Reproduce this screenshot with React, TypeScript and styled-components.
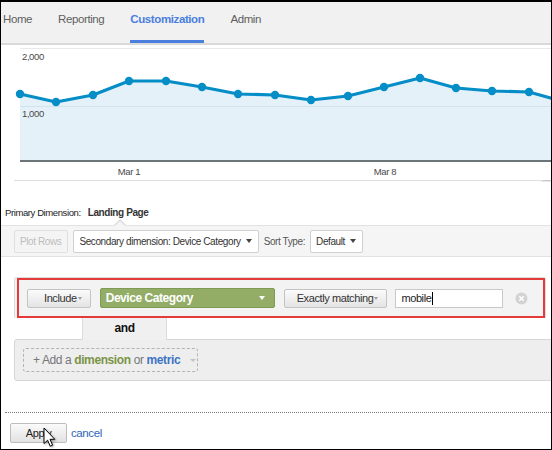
import styled, { createGlobalStyle } from "styled-components";

const FONT = `"Liberation Sans", Arial, sans-serif`;

const GlobalStyle = createGlobalStyle`
  * {
    box-sizing: border-box;
  }
  body {
    margin: 0;
    background: #fff;
    font-family: ${FONT};
    letter-spacing: -0.4px;
  }
  button {
    letter-spacing: inherit;
  }
`;

const navItems = ["Home", "Reporting", "Customization", "Admin"];

// sessions per day, already in page pixels
const points: [number, number][] = [
  [20, 94],
  [56, 102],
  [93, 95],
  [129, 81],
  [166, 81],
  [202, 87],
  [238, 94],
  [275, 95],
  [311, 100],
  [348, 96],
  [384, 87],
  [420, 78],
  [456, 88],
  [492, 91],
  [529, 92],
  [565, 102]
];

const Chart = () => {
  const line = points.map(([x, y]) => `${x},${y}`).join(" ");
  const area = `${line} 565,161 20,161`;
  return (
    <ChartSvg viewBox="1 45 550 137" width={550} height={137}>
      <line x1={20} y1={48.5} x2={560} y2={48.5} stroke="#e9e9e9" />
      <polygon points={area} fill="#e5f1f8" />
      <line x1={20} y1={106.5} x2={560} y2={106.5} stroke="#d2e3ec" />
      <line x1={20} y1={161} x2={560} y2={161} stroke="#6b7478" strokeWidth={2} />
      <polyline
        points={line}
        fill="none"
        stroke="#058dc7"
        strokeWidth={3.2}
        strokeLinejoin="round"
      />
      {points.slice(0, 15).map(([x, y], i) => (
        <circle key={`pt-${i}`} cx={x} cy={y} r={4.2} fill="#058dc7" />
      ))}
      <AxisText x={22} y={60}>
        2,000
      </AxisText>
      <AxisText x={22} y={117}>
        1,000
      </AxisText>
      <AxisText x={129} y={175} textAnchor="middle">
        Mar 1
      </AxisText>
      <AxisText x={385} y={175} textAnchor="middle">
        Mar 8
      </AxisText>
      <line x1={14} y1={180.5} x2={560} y2={180.5} stroke="#dedede" />
      <rect x={542.5} y={180.5} width={12} height={6} rx={1} fill="#e8e8e8" stroke="#c9c9c9" />
    </ChartSvg>
  );
};

const App = () => {
  return (
    <>
      <GlobalStyle />
      <Frame>
        <Nav>
          {navItems.map((item) => (
            <NavTab key={item} $active={item === "Customization"}>
              {item}
            </NavTab>
          ))}
        </Nav>

        <Chart />

        <PrimaryRow>
          <span>Primary Dimension:</span>
          <PrimaryValue>Landing Page</PrimaryValue>
        </PrimaryRow>

        <Toolbar>
          <ToolButton $disabled>Plot Rows</ToolButton>
          <ToolButton>
            Secondary dimension: Device Category
            <Caret $half={3.5} $color="#444" />
          </ToolButton>
          <ToolLabel>Sort Type:</ToolLabel>
          <ToolButton>
            Default
            <Caret $half={3.5} $color="#444" />
          </ToolButton>
        </Toolbar>

        <FilterCard>
          <Highlight>
            <FilterButton $padLeft={16}>
              Include
              <Caret $half={2.5} $color="#a0a0a0" />
            </FilterButton>
            <DimensionPill>
              Device Category
              <Caret $half={3.5} $color="#fff" />
            </DimensionPill>
            <FilterButton $padLeft={12}>
              Exactly matching
              <Caret $half={2.5} $color="#a0a0a0" />
            </FilterButton>
            <ValueInput>
              mobile
              <TextCursor />
            </ValueInput>
            <RemoveIcon width={13} height={13} viewBox="0 0 13 13">
              <circle cx={6.5} cy={6.5} r={6} fill="#d3d3d3" />
              <path d="M4.3 4.3 L8.7 8.7 M8.7 4.3 L4.3 8.7" stroke="#fff" strokeWidth={1.6} />
            </RemoveIcon>
          </Highlight>
        </FilterCard>

        <AndTab>and</AndTab>
        <AddPanel>
          <AddBox>
            <Muted>+ Add a</Muted>
            <Dimension>dimension</Dimension>
            <Muted>or</Muted>
            <Metric>metric</Metric>
            <Caret $half={3} $color="#c4c4c4" />
          </AddBox>
        </AddPanel>

        <Divider />

        <ApplyRow>
          <ApplyButton>Apply</ApplyButton>
          <CancelLink href="#">cancel</CancelLink>
        </ApplyRow>

        <Pointer width={14} height={21} viewBox="0 0 14 21">
          <path
            d="M1 1 L1 16.5 L4.6 13.2 L7.2 19.2 L9.6 18.2 L7 12.3 L11.8 12.3 Z"
            fill="#fff"
            stroke="#000"
            strokeWidth={1}
            strokeLinejoin="round"
          />
        </Pointer>
      </Frame>
    </>
  );
};

const Frame = styled.div`
  position: relative;
  width: 552px;
  height: 450px;
  overflow: hidden;
  background: #fff;
  border: 1px solid #000;
  border-top-width: 2px;
`;

const Nav = styled.nav`
  display: flex;
  gap: 26px;
  height: 43px;
  padding-left: 2px;
  background: #f1f1f1;
  border-bottom: 2px solid #d9d9d9;
`;

const NavTab = styled.div<{ $active?: boolean }>`
  height: 41px;
  padding-top: 10px;
  font-size: 11.5px;
  line-height: 15px;
  font-weight: ${({ $active }) => ($active ? "bold" : "normal")};
  color: ${({ $active }) => ($active ? "#4a7fe0" : "#5f5f5f")};
  border-bottom: 3px solid
    ${({ $active }) => ($active ? "#4a7fe0" : "transparent")};
`;

const ChartSvg = styled.svg`
  display: block;
`;

const AxisText = styled.text`
  font-family: ${FONT};
  font-size: 9.5px;
  letter-spacing: -0.4px;
  fill: #4a4a4a;
`;

const PrimaryRow = styled.div`
  height: 43px;
  display: flex;
  align-items: flex-end;
  gap: 7px;
  padding: 0 0 6px 4px;
  font-size: 9.5px;
  line-height: 12px;
  color: #222;
`;

const PrimaryValue = styled.span`
  font-size: 10px;
  font-weight: bold;
  color: #333;
`;

const Toolbar = styled.div`
  position: relative;
  height: 32px;
  display: flex;
  align-items: center;
  gap: 5px;
  padding-left: 13px;
  background: #f5f5f5;
  border-top: 1px solid #e2e2e2;
  border-bottom: 1px solid #e2e2e2;

  &::before,
  &::after {
    content: "";
    position: absolute;
    width: 0;
    height: 0;
    border-style: solid;
  }
  &::before {
    left: 113px;
    top: -7px;
    border-width: 0 6px 6px 6px;
    border-color: transparent transparent #dadada transparent;
  }
  &::after {
    left: 114px;
    top: -5px;
    border-width: 0 5px 5px 5px;
    border-color: transparent transparent #f5f5f5 transparent;
  }
`;

const ToolButton = styled.button<{ $disabled?: boolean }>`
  height: 23px;
  display: inline-flex;
  align-items: center;
  gap: 5px;
  padding: 0 6px 0 5px;
  border: 1px solid ${({ $disabled }) => ($disabled ? "#e0e0e0" : "#d0d0d0")};
  border-radius: 2px;
  background: ${({ $disabled }) => ($disabled ? "#f4f4f4" : "#fff")};
  color: ${({ $disabled }) => ($disabled ? "#bdbdbd" : "#333")};
  font-family: ${FONT};
  font-size: 10px;
  white-space: nowrap;
`;

const ToolLabel = styled.span`
  font-size: 10px;
  color: #555;
`;

const Caret = styled.span<{ $half: number; $color: string }>`
  display: inline-block;
  flex-shrink: 0;
  width: 0;
  height: 0;
  border-left: ${({ $half }) => $half}px solid transparent;
  border-right: ${({ $half }) => $half}px solid transparent;
  border-top: ${({ $half }) => Math.round($half * 1.15)}px solid
    ${({ $color }) => $color};
`;

const FilterCard = styled.div`
  width: 532px;
  margin: 20px 0 0 13px;
  padding-left: 2px;
  background: #f3f3f3;
  border: 1px solid #dcdcdc;
  border-bottom: none;
  border-radius: 3px 3px 0 0;
`;

const Highlight = styled.div`
  height: 40px;
  display: flex;
  align-items: center;
  gap: 9px;
  padding-left: 8px;
  border: 2px solid #e53a3a;
`;

const FilterButton = styled.button<{ $padLeft: number }>`
  height: 19px;
  display: inline-flex;
  align-items: center;
  gap: 1px;
  padding: 0 8px 0 ${({ $padLeft }) => $padLeft}px;
  border: 1px solid #c4c4c4;
  border-radius: 2px;
  background: linear-gradient(#fbfbfb, #e4e4e4);
  color: #333;
  font-family: ${FONT};
  font-size: 11px;
  white-space: nowrap;
`;

const DimensionPill = styled.div`
  width: 175px;
  height: 20px;
  display: flex;
  align-items: center;
  justify-content: space-between;
  padding: 0 9px 0 5px;
  background: #93ad67;
  border: 1px solid #7f9a52;
  border-radius: 2px;
  color: #fff;
  font-size: 12px;
  font-weight: bold;
  letter-spacing: -0.45px;
`;

const ValueInput = styled.div`
  width: 108px;
  height: 19px;
  display: flex;
  align-items: center;
  margin-left: -1px;
  padding-left: 5px;
  background: #fff;
  border: 1px solid #c8c8c8;
  color: #222;
  font-size: 11px;
`;

const TextCursor = styled.span`
  width: 1px;
  height: 13px;
  margin-left: 1px;
  background: #000;
`;

const RemoveIcon = styled.svg`
  margin-left: 3px;
`;

const AndTab = styled.div`
  position: relative;
  z-index: 1;
  width: 85px;
  height: 22px;
  margin: 0 0 -1px 81px;
  background: #f0f0f0;
  border-left: 1px solid #dcdcdc;
  border-right: 1px solid #dcdcdc;
  text-align: center;
  font-size: 12px;
  font-weight: bold;
  line-height: 20px;
  color: #111;
`;

const AddPanel = styled.div`
  width: 545px;
  height: 42px;
  margin-left: 13px;
  padding: 8px 0 0 8px;
  background: #eeeeee;
  border: 1px solid #d6d6d6;
  border-radius: 3px 0 0 3px;
`;

const AddBox = styled.div`
  width: 175px;
  height: 24px;
  display: flex;
  align-items: center;
  gap: 3px;
  padding-left: 9px;
  border: 1px dashed #b3b3b3;
  border-radius: 3px;
  font-size: 12px;
  white-space: nowrap;

  & > span:last-child {
    margin-left: 7px;
  }
`;

const Muted = styled.span`
  color: #777;
`;

const Dimension = styled.span`
  color: #7b9446;
  font-weight: bold;
`;

const Metric = styled.span`
  color: #3f73c4;
  font-weight: bold;
`;

const Divider = styled.div`
  margin: 31px 0 0 4px;
  border-top: 1px dotted #7a7a7a;
`;

const ApplyRow = styled.div`
  display: flex;
  align-items: center;
  gap: 4px;
  margin-top: 10px;
  padding-left: 9px;
`;

const ApplyButton = styled.button`
  width: 57px;
  height: 20px;
  padding: 0;
  border: 1px solid #bdbdbd;
  border-radius: 2px;
  background: linear-gradient(#fafafa, #e2e2e2);
  color: #222;
  font-family: ${FONT};
  font-size: 11px;
`;

const CancelLink = styled.a`
  font-size: 11.5px;
  color: #2f65b8;
  text-decoration: none;
`;

const Pointer = styled.svg`
  position: absolute;
  left: 42px;
  top: 425px;
  filter: drop-shadow(1px 1px 1px rgba(0, 0, 0, 0.35));
`;

export default App;
